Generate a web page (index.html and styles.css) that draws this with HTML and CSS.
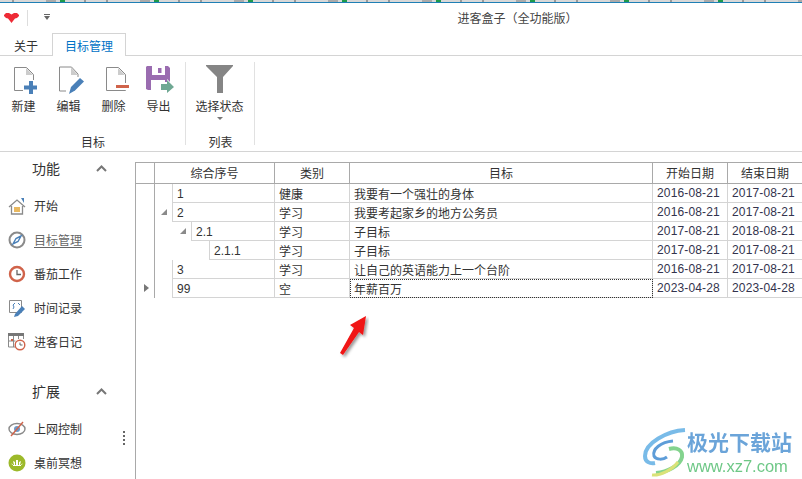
FILE: index.html
```html
<!DOCTYPE html>
<html lang="zh">
<head>
<meta charset="utf-8">
<title>进客盒子</title>
<link rel="stylesheet" href="styles.css">
</head>
<body>
<div class="app">
  <div class="topstrip"></div>
  <header class="titlebar">
    <svg class="logo" width="15" height="10" viewBox="0 0 15 10"><path fill="#ee2b36" d="M0 2 2 0h3l2.500 1.500L10 0h3l2 2v1l-2 2-2 .5L9 8l-1.500 2L6 8 4 5.500 2 5 0 3z"/></svg>
    <span class="qsep"></span>
    <svg class="qa" width="6" height="6" viewBox="0 0 6 6"><path fill="#666" d="M0 0h6v1H0zM0 2h6L3 6z"/></svg>
    <div class="apptitle">进客盒子（全功能版）</div>
  </header>
  <nav class="tabs">
    <span class="tab">关于</span>
    <span class="tab active">目标管理</span>
  </nav>
  <section class="ribbon">
    <div class="group group-main">
      <div class="group-items">
        <div class="rbtn"><svg width="30" height="28" viewBox="0 0 30 28"><path fill="none" stroke="#8a8a8a" d="M5.500 1.500h12l7 7v16h-19z"/><path fill="#ccc" d="M17 2v7h7z"/><path fill="#fff" d="M14 14h16v14H14z"/><path fill="#4a80b8" d="M20 15h4v4.500h4v4h-4V28h-4v-4.500h-5v-4h5z"/></svg><span>新建</span></div>
        <div class="rbtn"><svg width="30" height="28" viewBox="0 0 30 28"><path fill="none" stroke="#8a8a8a" d="M5.500 1h12l6.500 7v17H5.500z"/><path fill="#ccc" d="M17 1.500V9h7z"/><path fill="#fff" d="M12 11h18v17H12z"/><path fill="#4a80b8" d="M17 21 26 12l4 3.500-9 9-6 3.500z"/></svg><span>编辑</span></div>
        <div class="rbtn"><svg width="30" height="28" viewBox="0 0 30 28"><path fill="none" stroke="#8a8a8a" d="M7.500 1.500h12l7 7v16h-19z"/><path fill="#ccc" d="M19 2v7h7z"/><path fill="#fff" d="M16 17h14v7H16z"/><path fill="#d0634a" d="M17 19h13v3H17z"/></svg><span>删除</span></div>
        <div class="rbtn"><svg width="32" height="28" viewBox="0 0 32 28"><path fill="#9a6cb0" d="M4 0h21l2 2v22H5l-2-1V1z"/><path fill="#fff" d="M9 0h13v9H9zM8 14h14v10H8z"/><path fill="#9a6cb0" d="M15 2h3.500v5H15z"/><path fill="#fff" d="M17 16h7v-3l8 8-8 8v-3h-7z"/><path fill="#6fa893" d="M18 18h6v-4l7 7-7 6v-3h-6z"/></svg><span>导出</span></div>
      </div>
      <div class="group-label">目标</div>
    </div>
    <div class="group group-list">
      <div class="group-items">
        <div class="rbtn rbtn-wide"><svg width="27" height="28" viewBox="0 0 27 28"><path fill="#858585" d="M0 0h27v1L17 12v16h-6V12L0 1z"/></svg><span>选择状态</span><i class="caret"></i></div>
      </div>
      <div class="group-label">列表</div>
    </div>
  </section>
  <main class="body">
    <aside class="sidebar">
      <div class="side-head"><span>功能</span><svg width="11" height="7" viewBox="0 0 11 7"><path fill="none" stroke="#777" stroke-width="2" d="M1 6l4.500-4.500L10 6"/></svg></div>
      <ul class="side-list">
        <li><svg width="18" height="17" viewBox="0 0 18 17"><path fill="none" stroke="#8a8a8a" stroke-width="1.300" d="M1 9l8-7 8 7M3.500 8v8h11V8"/><path fill="#e8b860" d="M6 9h6v5H6z"/><path fill="#4a80b8" d="M13 0h3v5z"/></svg><span>开始</span></li>
        <li><svg width="18" height="18" viewBox="0 0 18 18"><circle cx="9" cy="9" r="7.500" fill="none" stroke="#8a8a8a" stroke-width="2"/><path fill="none" stroke="#4a80b8" stroke-width="1.400" d="M13 5 8 7.500 5 13l5-2.500z"/></svg><span class="link">目标管理</span></li>
        <li><svg width="18" height="18" viewBox="0 0 18 18"><circle cx="9" cy="9" r="7" fill="#fff" stroke="#d0634a" stroke-width="2.400"/><path fill="none" stroke="#666" stroke-width="1.300" d="M9 5v4.500h4"/></svg><span>番茄工作</span></li>
        <li><svg width="18" height="18" viewBox="0 0 18 18"><path fill="none" stroke="#8a8a8a" d="M1.500 1.500h12v12h-12z"/><path fill="none" stroke="#4a80b8" d="M7 4 5 6l1 2-1 2M10 4l2 2"/><path fill="#4a80b8" d="M7 15l7-8 3 3-7 7-4 1z"/></svg><span>时间记录</span></li>
        <li><svg width="18" height="18" viewBox="0 0 18 18"><path fill="#777" d="M0 0h16v3H0z"/><path fill="none" stroke="#8a8a8a" d="M.5 3v11h7M5.500 3v11M.5 8h7M10.500 3v3M15.500 3v3"/><path fill="#d0634a" d="M3 6h2v2H3z"/><circle cx="12" cy="12" r="4.800" fill="#fff" stroke="#d0634a" stroke-width="1.400"/><path fill="none" stroke="#666" d="M12 9.500V12h2.500"/></svg><span>进客日记</span></li>
      </ul>
      <div class="side-head second"><span>扩展</span><svg width="11" height="7" viewBox="0 0 11 7"><path fill="none" stroke="#777" stroke-width="2" d="M1 6l4.500-4.500L10 6"/></svg></div>
      <ul class="side-list second">
        <li><svg width="18" height="16" viewBox="0 0 18 16"><ellipse cx="9" cy="8" rx="8" ry="5.500" fill="none" stroke="#8a8a8a" stroke-width="1.400"/><circle cx="9" cy="8" r="3" fill="#6b9ac9"/><path stroke="#d0634a" stroke-width="1.400" d="M3 15 15 1"/></svg><span>上网控制</span></li>
        <li><svg width="18" height="18" viewBox="0 0 18 18"><circle cx="9" cy="9" r="8.500" fill="#9cb92a"/><path fill="#fff" d="M8 6h2v5H8zM5 7l2 1v3H6zM13 7l-2 1v3h1zM3.500 9 5 11H4zM14.500 9 13 11h1zM5 11h8v1H5z"/></svg><span>桌前冥想</span></li>
      </ul>
      <div class="grip"><i></i><i></i><i></i><i></i></div>
    </aside>
    <div class="content">
      <div class="grid">
        <div class="row head">
          <div class="ind"></div>
          <div class="c c-no">综合序号</div>
          <div class="c c-type">类别</div>
          <div class="c c-goal">目标</div>
          <div class="c c-date">开始日期</div>
          <div class="c c-date">结束日期</div>
        </div>
        <div class="row">
          <div class="ind"></div>
          <div class="c c-no"><span class="tree"></span><span class="no">1</span></div>
          <div class="c c-type">健康</div><div class="c c-goal">我要有一个强壮的身体</div>
          <div class="c c-date num">2016-08-21</div><div class="c c-date num">2017-08-21</div>
        </div>
        <div class="row">
          <div class="ind"></div>
          <div class="c c-no"><span class="tree"><i class="open"></i></span><span class="no">2</span></div>
          <div class="c c-type">学习</div><div class="c c-goal">我要考起家乡的地方公务员</div>
          <div class="c c-date num">2016-08-21</div><div class="c c-date num">2017-08-21</div>
        </div>
        <div class="row">
          <div class="ind"></div>
          <div class="c c-no"><span class="tree l1"><i class="open"></i></span><span class="no">2.1</span></div>
          <div class="c c-type">学习</div><div class="c c-goal">子目标</div>
          <div class="c c-date num">2017-08-21</div><div class="c c-date num">2018-08-21</div>
        </div>
        <div class="row">
          <div class="ind"></div>
          <div class="c c-no"><span class="tree l2"></span><span class="no">2.1.1</span></div>
          <div class="c c-type">学习</div><div class="c c-goal">子目标</div>
          <div class="c c-date num">2017-08-21</div><div class="c c-date num">2017-08-21</div>
        </div>
        <div class="row">
          <div class="ind"></div>
          <div class="c c-no"><span class="tree"></span><span class="no">3</span></div>
          <div class="c c-type">学习</div><div class="c c-goal">让自己的英语能力上一个台阶</div>
          <div class="c c-date num">2016-08-21</div><div class="c c-date num">2017-08-21</div>
        </div>
        <div class="row">
          <div class="ind"><i class="cur"></i></div>
          <div class="c c-no"><span class="tree"></span><span class="no">99</span></div>
          <div class="c c-type">空</div><div class="c c-goal focus">年薪百万</div>
          <div class="c c-date num">2023-04-28</div><div class="c c-date num">2023-04-28</div>
        </div>
      </div>
    </div>
  </main>
  <svg class="arrow" width="36" height="48" viewBox="0 0 36 48"><defs><filter id="s"><feDropShadow dx="2" dy="2" stdDeviation="1.500" flood-color="#000" flood-opacity=".4"/></filter></defs><path filter="url(#s)" fill="#f01414" d="M27 2 24 21 20 18 4 41 1 39 15 14 11 11z"/></svg>
  <div class="watermark">
    <svg width="43" height="50" viewBox="0 0 43 50"><path fill="none" stroke="#6bb4e6" stroke-width="4" d="M42 2C24 3 2 15 2 28c0 6 5 8 10 7"/><path fill="none" stroke="#4d93d4" stroke-width="3" d="M30 13C18 14 9 21 11 28c2 4 9 4 13 1"/><path fill="none" stroke="#77cf82" stroke-width="4" d="M26 21c8-2 14 1 13 8-2 9-15 15-26 16"/><path fill="none" stroke="#d6df6a" stroke-width="3" d="M35 34C29 42 17 48 9 47"/></svg>
    <div class="wm-text"><b>极光下载站</b><em>www.xz7.com</em></div>
  </div>
</div>
</body>
</html>
```
FILE: styles.css
```css
* { box-sizing: border-box; }
html, body { margin: 0; height: 100%; }
body { background: #fff; color: #333; font: 12px/1 "Noto Sans CJK SC", "Liberation Sans", sans-serif; overflow: hidden; }
ul { list-style: none; margin: 0; padding: 0; }
.app { position: relative; width: 802px; height: 479px; display: flex; flex-direction: column; overflow: hidden; }
.topstrip {
  height: 3px; flex: none; border-bottom: 1px solid #1f7fb5;
  background: linear-gradient(90deg, #d8d8d8 0 12px, #999 12px 14px, #d8d8d8 14px 46px, #aaa 46px 56px, #d8d8d8 56px 60px, #1d9a4a 60px 65px, #d8d8d8 65px 84px, #999 84px 86px, #d8d8d8 86px 94px) 0 0 / 94px 2px repeat-x;
}
.titlebar { height: 29px; flex: none; display: flex; align-items: center; position: relative; padding-left: 4px; }
.qsep { width: 1px; height: 16px; background: #ddd; margin-left: 8px; }
.qa { margin-left: 16px; margin-top: -2px; }
.apptitle { position: absolute; left: 0; right: 0; top: 8px; padding-left: 233px; text-align: center; line-height: 14px; color: #444; }
.tabs { height: 24px; flex: none; display: flex; align-items: flex-end; border-bottom: 1px solid #d4d4d4; position: relative; }
.tab { height: 23px; width: 52px; text-align: center; line-height: 28px; }
.tab.active { width: 74px; height: 23px; border: 1px solid #d4d4d4; border-bottom: 0; margin-bottom: -1px; background: #fff; color: #0072c6; line-height: 24px; }
.ribbon { height: 96px; flex: none; display: flex; border-bottom: 1px solid #d4d4d4; }
.group { display: flex; flex-direction: column; position: relative; }
.group::after { content: ""; position: absolute; right: 0; top: 6px; bottom: 6px; width: 1px; background: #e1e1e1; }
.group-main { width: 186px; }
.group-list { width: 69px; }
.group-items { flex: 1; display: flex; padding: 10px 0 0 1px; }
.group-label { height: 20px; text-align: center; line-height: 22px; }
.rbtn { width: 45px; display: flex; flex-direction: column; align-items: center; }
.rbtn svg { flex: none; }
.rbtn span { margin-top: 5px; line-height: 14px; white-space: nowrap; }
.rbtn-wide { width: 65px; margin-top: -1px; }
.rbtn-wide span { margin-top: 6px; }
.caret { width: 0; height: 0; border: 3px solid transparent; border-top: 3px solid #777; margin-top: 4px; }
.body { flex: 1; display: flex; min-height: 0; }
.sidebar { width: 135px; flex: none; position: relative; overflow: hidden; padding-top: 7px; }
.side-head { height: 18px; display: flex; align-items: center; font-size: 14px; padding-left: 32px; gap: 36px; }
.side-head.second { margin-top: 23px; }
.side-list { margin-top: 12px; }
.side-list.second { margin-top: 12px; }
.side-list li { height: 34px; display: flex; align-items: center; gap: 8px; padding-left: 8px; }
.side-list svg { width: 18px; flex: none; }
.link { text-decoration: underline; color: #666; text-underline-offset: 2px; }
.grip { position: absolute; left: 123px; top: 279px; display: flex; flex-direction: column; gap: 2px; }
.grip i { width: 2px; height: 2px; background: #666; }
.content { flex: 1; min-width: 0; border-left: 1px solid #a9a9a9; margin-top: 10px; }
.grid { display: flex; flex-direction: column; }
.row { display: flex; height: 19px; line-height: 19px; }
.row.head { height: 22px; border-top: 1px solid #a9a9a9; }
.row.head .c, .row.head .ind { border-bottom: 1px solid #a9a9a9; border-right-color: #a9a9a9; text-align: center; line-height: 20px; padding: 0; }
.row.head .c-no { justify-content: center; }
.ind { width: 19px; flex: none; border-right: 1px solid #a9a9a9; position: relative; }
.c { padding-left: 4px; border-bottom: 1px solid #d4d4d4; border-right: 1px solid #d4d4d4; white-space: nowrap; flex: none; }
.c-no { width: 120px; padding-left: 0; display: flex; }
.row:not(.head) .c-no { border-bottom: 0; }
.c-type { width: 75px; }
.c-goal { width: 303px; }
.c-date { width: 75px; }
.num, .no { font-family: "Liberation Sans", sans-serif; color: #33334d; }
.num { letter-spacing: .15px; }
.tree { width: 18px; flex: none; height: 19px; position: relative; border-right: 1px solid #d4d4d4; }
.tree.l1 { width: 37px; }
.tree.l2 { width: 55px; }
.no { flex: 1; padding-left: 4px; border-bottom: 1px solid #d4d4d4; color: #333; line-height: 21px; }
.open { position: absolute; right: 5px; top: 6px; width: 0; height: 0; border-left: 6px solid transparent; border-bottom: 6px solid #8a8a8a; }
.cur { position: absolute; left: 8px; top: 5px; width: 0; height: 0; border: 4px solid transparent; border-left: 5px solid #777; border-right: 0; }
.focus { outline: 1px dotted #333; outline-offset: -1px; }
.arrow { position: absolute; left: 339px; top: 314px; }
.watermark { position: absolute; left: 643px; top: 428px; display: flex; gap: 1px; opacity: .9; }
.wm-text { display: flex; flex-direction: column; padding-top: 1px; }
.wm-text b { font-size: 21px; line-height: 24px; color: #5b9bd5; white-space: nowrap; }
.wm-text em { font: normal 16.5px/20px "Liberation Sans", sans-serif; color: #5fc27a; margin-top: 3px; }
```
